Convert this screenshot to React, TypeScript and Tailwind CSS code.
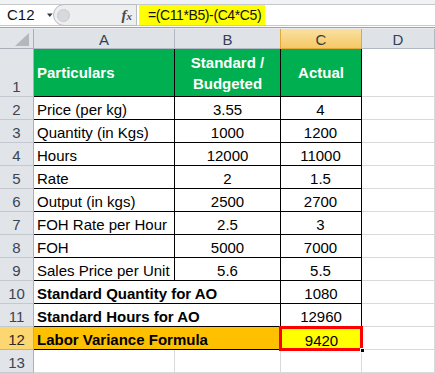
import React from "react";

type Row = {
  n: number;
  a: string;
  b?: string;
  c: string;
  bold?: boolean;
  merged?: boolean;
};

const rows: Row[] = [
  { n: 2, a: "Price (per kg)", b: "3.55", c: "4" },
  { n: 3, a: "Quantity (in Kgs)", b: "1000", c: "1200" },
  { n: 4, a: "Hours", b: "12000", c: "11000" },
  { n: 5, a: "Rate", b: "2", c: "1.5" },
  { n: 6, a: "Output (in kgs)", b: "2500", c: "2700" },
  { n: 7, a: "FOH Rate per Hour", b: "2.5", c: "3" },
  { n: 8, a: "FOH", b: "5000", c: "7000" },
  { n: 9, a: "Sales Price per Unit", b: "5.6", c: "5.5" },
  { n: 10, a: "Standard Quantity for AO", c: "1080", bold: true, merged: true },
  { n: 11, a: "Standard Hours for AO", c: "12960", bold: true, merged: true },
];

const font = { fontFamily: '"Liberation Sans", Arial, sans-serif' };

function RowNum({ n, active }: { n: number; active?: boolean }) {
  return (
    <div
      className={`flex items-end justify-center pb-[1px] border-r border-b text-[15px] leading-[17px] ${
        active
          ? "bg-[#fcd670] border-r-[#e2a93a] border-b-[#e2b04a] text-[#2b2b2b]"
          : "bg-[#e1e4e9] border-r-[#a9b0b9] border-b-[#c4c9d0] text-[#3a4554]"
      }`}
    >
      {n}
    </div>
  );
}

export default function App() {
  return (
    <div className="w-[435px] h-[373px] overflow-hidden bg-white text-black" style={font}>
      {/* formula bar */}
      <div className="bg-[#f1f2f3] pt-[4px]">
        <div className="h-[22px] flex items-stretch bg-white border-y border-[#c5c8cc]">
          <div className="w-[53px] flex items-center pl-[7px] text-[15px] text-[#111]">
            <span>C12</span>
            <svg width="8" height="5" viewBox="0 0 8 5" className="ml-[12px]">
              <path d="M0 0 H7 L3.5 4.5 Z" fill="#3a3a3a" />
            </svg>
          </div>
          <div className="w-[84px] flex items-center bg-[#eceef0] rounded-l-[11px] border border-[#b9bdc2] -my-[1px]">
            <div className="ml-[3px] w-[13px] h-[13px] rounded-full bg-[#d7d9dc] border border-[#c8cbcf]" />
            <div className="ml-auto mr-[4px] text-[15px] italic font-bold text-[#4a4a4a]" style={{ fontFamily: '"Liberation Serif", serif' }}>
              f<span className="text-[11px]">x</span>
            </div>
          </div>
          <div className="w-[2px]" />
          <div className="w-[126px] bg-[#ffff00] flex items-center pl-[9px] text-[14px] tracking-[-0.4px] whitespace-nowrap text-[#111]">
            =(C11*B5)-(C4*C5)
          </div>
          <div className="flex-1" />
        </div>
        <div className="h-[1px] bg-white" />
        <div className="h-[1px] bg-[#9ea3a9]" />
        <div className="h-[1px] bg-[#e8eaed]" />
      </div>

      {/* grid */}
      <div className="grid grid-cols-[34px_141px_106px_81px_73px] text-[15px] leading-[17px]">
        {/* column headers */}
        <div className="h-[20px] bg-[#e1e4e9] border-r border-b border-[#a9b0b9] flex items-end justify-end pr-[4px] pb-[2px]">
          <svg width="14" height="13" viewBox="0 0 14 13">
            <path d="M14 0 V13 H0 Z" fill="#b4b8be" />
          </svg>
        </div>
        {["A", "B"].map((h) => (
          <div key={h} className="h-[20px] bg-[#dfe3e8] border-r border-b border-[#b3b9c2] flex items-end justify-center text-[#344152]">
            {h}
          </div>
        ))}
        <div className="h-[20px] bg-gradient-to-b from-[#fae0a0] to-[#f4c965] border-r border-b border-[#e3a83c] border-l border-l-[#e3a83c] -ml-[1px] flex items-end justify-center text-[#3a3a3a]">
          C
        </div>
        <div className="h-[20px] bg-[#dfe3e8] border-r border-b border-[#b3b9c2] flex items-end justify-center text-[#344152]">
          D
        </div>

        {/* row 1 header */}
        <div className="h-[48px] grid">
          <RowNum n={1} />
        </div>
        <div className="h-[48px] bg-[#00b050] border-r border-b border-black flex items-center pl-[3px] font-bold text-white">
          Particulars
        </div>
        <div className="h-[48px] bg-[#00b050] border-r border-b border-black flex items-center justify-center text-center font-bold text-white leading-[21px] pt-[1px]">
          Standard /<br />Budgeted
        </div>
        <div className="h-[48px] bg-[#00b050] border-r border-b border-black flex items-center justify-center font-bold text-white">
          Actual
        </div>
        <div className="h-[48px] border-r border-b border-[#d9d9d9]" />

        {rows.map((r) => (
          <React.Fragment key={r.n}>
            <div className="h-[23px] grid">
              <RowNum n={r.n} />
            </div>
            <div
              className={`h-[23px] border-b border-black flex items-end pb-[1px] pl-[3px] whitespace-nowrap ${
                r.merged ? "col-span-2" : "border-r"
              } ${r.bold ? "font-bold" : ""}`}
            >
              {r.a}
            </div>
            {!r.merged && (
              <div className="h-[23px] border-r border-b border-black flex items-end justify-center pb-[1px]">{r.b}</div>
            )}
            <div className={`h-[23px] border-r border-b border-black flex items-end justify-center pb-[1px] ${r.merged ? "border-l" : ""} -ml-[1px]`}>
              {r.c}
            </div>
            <div className="h-[23px] border-r border-b border-[#d9d9d9]" />
          </React.Fragment>
        ))}

        {/* row 12 */}
        <div className="h-[23px] grid">
          <RowNum n={12} active />
        </div>
        <div className="h-[23px] col-span-2 bg-[#ffc000] border-b border-black flex items-end pb-[1px] pl-[3px] font-bold whitespace-nowrap">
          Labor Variance Formula
        </div>
        <div className="h-[23px] relative bg-[#ffff00] flex items-end justify-center pb-[1px]">
          9420
          <div className="absolute -left-[2px] -top-[1px] -right-[1px] -bottom-[1px] border-[3px] border-[#ff0000]" />
          <div className="absolute -right-[3px] -bottom-[3px] w-[5px] h-[5px] bg-black border border-white" />
        </div>
        <div className="h-[23px] border-r border-b border-[#d9d9d9]" />

        {/* row 13 */}
        <div className="h-[23px] grid">
          <RowNum n={13} />
        </div>
        <div className="h-[23px] border-r border-b border-[#d9d9d9]" />
        <div className="h-[23px] border-r border-b border-[#d9d9d9]" />
        <div className="h-[23px] border-r border-b border-[#d9d9d9]" />
        <div className="h-[23px] border-r border-b border-[#d9d9d9]" />
      </div>
    </div>
  );
}
